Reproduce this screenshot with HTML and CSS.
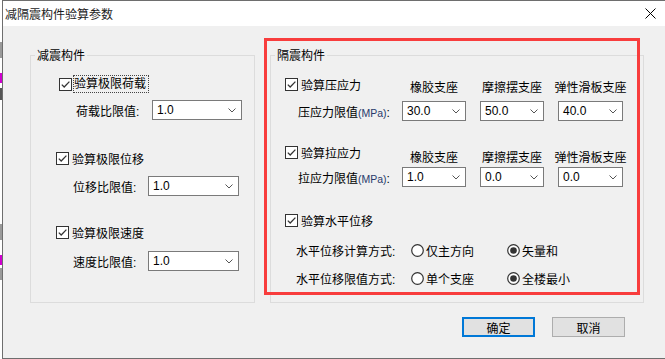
FILE: index.html
```html
<!DOCTYPE html>
<html lang="zh-CN">

<head>
    <meta charset="UTF-8">
    <meta name="viewport" content="width=device-width, initial-scale=1.0">
    <title>减隔震构件验算参数</title>
    <link rel="stylesheet" href="styles.css">
</head>

<body>
    <div class="screen">
        <div class="desk">
            <i class="mk-gray" style="margin-top:42px;height:16px"></i>
            <i class="mk-pink" style="margin-top:15px;height:10px"></i>
            <i class="mk-dark" style="margin-top:5px;height:12px"></i>
            <i class="mk-gray" style="margin-top:124px;height:16px"></i>
            <i class="mk-pink" style="margin-top:15px;height:10px"></i>
            <i class="mk-gray" style="margin-top:3px;height:12px"></i>
        </div>

        <div class="window">
            <div class="titlebar">
                <span class="title">减隔震构件验算参数</span>
                <svg class="close" width="11" height="11" viewBox="0 0 11 11">
                    <path d="M0.5 0.5 L10.5 10.5 M10.5 0.5 L0.5 10.5" stroke="#000" stroke-width="1" fill="none" />
                </svg>
            </div>

            <div class="body">
                <div class="groups">
                    <!-- 减震构件 -->
                    <section class="group group-left">
                        <span class="legend">减震构件</span>

                        <div class="check check-a">
                            <span class="box"><svg width="11" height="11" viewBox="0 0 11 11"><path d="M1.8 5.6 L4.2 8 L9.4 2.6" fill="none" stroke="#333" stroke-width="1.3" /></svg></span>
                            <span class="focus">验算极限荷载</span>
                        </div>
                        <div class="field field-a">
                            <span class="flabel">荷载比限值:</span>
                            <div class="select"><span>1.0</span><svg width="8" height="5" viewBox="0 0 8 5"><path d="M0.5 0.5 L4 4 L7.5 0.5" fill="none" stroke="#555" /></svg></div>
                        </div>

                        <div class="check check-b">
                            <span class="box"><svg width="11" height="11" viewBox="0 0 11 11"><path d="M1.8 5.6 L4.2 8 L9.4 2.6" fill="none" stroke="#333" stroke-width="1.3" /></svg></span>
                            <span>验算极限位移</span>
                        </div>
                        <div class="field field-b">
                            <span class="flabel">位移比限值:</span>
                            <div class="select"><span>1.0</span><svg width="8" height="5" viewBox="0 0 8 5"><path d="M0.5 0.5 L4 4 L7.5 0.5" fill="none" stroke="#555" /></svg></div>
                        </div>

                        <div class="check check-c">
                            <span class="box"><svg width="11" height="11" viewBox="0 0 11 11"><path d="M1.8 5.6 L4.2 8 L9.4 2.6" fill="none" stroke="#333" stroke-width="1.3" /></svg></span>
                            <span>验算极限速度</span>
                        </div>
                        <div class="field field-c">
                            <span class="flabel">速度比限值:</span>
                            <div class="select"><span>1.0</span><svg width="8" height="5" viewBox="0 0 8 5"><path d="M0.5 0.5 L4 4 L7.5 0.5" fill="none" stroke="#555" /></svg></div>
                        </div>
                    </section>

                    <!-- 隔震构件 -->
                    <section class="group group-right">
                        <span class="legend">隔震构件</span>

                        <div class="blk blk-1">
                            <div class="check rcheck">
                                <span class="box"><svg width="11" height="11" viewBox="0 0 11 11"><path d="M1.8 5.6 L4.2 8 L9.4 2.6" fill="none" stroke="#333" stroke-width="1.3" /></svg></span>
                                <span>验算压应力</span>
                            </div>
                            <span class="hd">橡胶支座</span>
                            <span class="hd">摩擦摆支座</span>
                            <span class="hd">弹性滑板支座</span>
                            <span class="rlabel">压应力限值<small>(MPa)</small>:</span>
                            <div class="select"><span>30.0</span><svg width="8" height="5" viewBox="0 0 8 5"><path d="M0.5 0.5 L4 4 L7.5 0.5" fill="none" stroke="#555" /></svg></div>
                            <div class="select"><span>50.0</span><svg width="8" height="5" viewBox="0 0 8 5"><path d="M0.5 0.5 L4 4 L7.5 0.5" fill="none" stroke="#555" /></svg></div>
                            <div class="select"><span>40.0</span><svg width="8" height="5" viewBox="0 0 8 5"><path d="M0.5 0.5 L4 4 L7.5 0.5" fill="none" stroke="#555" /></svg></div>
                        </div>

                        <div class="blk blk-2">
                            <div class="check rcheck">
                                <span class="box"><svg width="11" height="11" viewBox="0 0 11 11"><path d="M1.8 5.6 L4.2 8 L9.4 2.6" fill="none" stroke="#333" stroke-width="1.3" /></svg></span>
                                <span>验算拉应力</span>
                            </div>
                            <span class="hd">橡胶支座</span>
                            <span class="hd">摩擦摆支座</span>
                            <span class="hd">弹性滑板支座</span>
                            <span class="rlabel">拉应力限值<small>(MPa)</small>:</span>
                            <div class="select"><span>1.0</span><svg width="8" height="5" viewBox="0 0 8 5"><path d="M0.5 0.5 L4 4 L7.5 0.5" fill="none" stroke="#555" /></svg></div>
                            <div class="select"><span>0.0</span><svg width="8" height="5" viewBox="0 0 8 5"><path d="M0.5 0.5 L4 4 L7.5 0.5" fill="none" stroke="#555" /></svg></div>
                            <div class="select"><span>0.0</span><svg width="8" height="5" viewBox="0 0 8 5"><path d="M0.5 0.5 L4 4 L7.5 0.5" fill="none" stroke="#555" /></svg></div>
                        </div>

                        <div class="check rcheck check-h">
                            <span class="box"><svg width="11" height="11" viewBox="0 0 11 11"><path d="M1.8 5.6 L4.2 8 L9.4 2.6" fill="none" stroke="#333" stroke-width="1.3" /></svg></span>
                            <span>验算水平位移</span>
                        </div>

                        <div class="rrow rrow-1">
                            <span>水平位移计算方式:</span>
                            <label class="opt"><svg class="radio" width="13" height="13" viewBox="0 0 13 13"><circle cx="6.5" cy="6.5" r="5.8" fill="#fff" stroke="#333" stroke-width="1.2" /></svg>仅主方向</label>
                            <label class="opt"><svg class="radio" width="13" height="13" viewBox="0 0 13 13"><circle cx="6.5" cy="6.5" r="5.8" fill="#fff" stroke="#333" stroke-width="1.2" /><circle cx="6.5" cy="6.5" r="3.3" fill="#333" /></svg>矢量和</label>
                        </div>
                        <div class="rrow rrow-2">
                            <span>水平位移限值方式:</span>
                            <label class="opt"><svg class="radio" width="13" height="13" viewBox="0 0 13 13"><circle cx="6.5" cy="6.5" r="5.8" fill="#fff" stroke="#333" stroke-width="1.2" /></svg>单个支座</label>
                            <label class="opt"><svg class="radio" width="13" height="13" viewBox="0 0 13 13"><circle cx="6.5" cy="6.5" r="5.8" fill="#fff" stroke="#333" stroke-width="1.2" /><circle cx="6.5" cy="6.5" r="3.3" fill="#333" /></svg>全楼最小</label>
                        </div>
                    </section>
                </div>

                <div class="buttons">
                    <button class="btn btn-default">确定</button>
                    <button class="btn">取消</button>
                </div>
            </div>

            <!-- 红色标注框 -->
            <div class="mark"></div>
        </div>
    </div>
</body>

</html>
```

FILE: styles.css
```css
* {
    box-sizing: border-box;
}

body {
    margin: 0;
    font-family: "Liberation Sans", "Noto Sans CJK SC", sans-serif;
    font-size: 12px;
    color: #000;
    background: #fff;
}

.screen {
    display: flex;
    width: 665px;
    height: 359px;
    overflow: hidden;
}

.desk {
    width: 2px;
    display: flex;
    flex-direction: column;
    background: #fff;
}

.desk i {
    display: block;
    flex: none;
}

.mk-gray {
    background: #9a9a9a;
}

.mk-dark {
    background: #555;
}

.mk-pink {
    background: #d000d0;
}

.window {
    position: relative;
    flex: 1;
    display: flex;
    flex-direction: column;
    border: 1px solid #6e6e6e;
    border-right: none;
    background: #f0f0f0;
}

.titlebar {
    height: 25px;
    flex: none;
    display: flex;
    align-items: center;
    justify-content: space-between;
    padding: 0 9px 0 2px;
    background: #fff;
}

.title {
    color: #1b1b1b;
}

.body {
    flex: 1;
}

.groups {
    display: flex;
    gap: 15px;
    margin: 29px 0 0 27px;
}

.group {
    height: 248px;
    border: 1px solid #dcdcdc;
}

.group-left {
    width: 225px;
}

.group-right {
    width: 374px;
}

.legend {
    display: block;
    width: max-content;
    margin: -8px 0 0 4px;
    padding: 0 2px;
    line-height: 16px;
    background: #f0f0f0;
}

/* checkbox rows */
.check {
    display: flex;
    align-items: center;
    height: 18px;
    white-space: nowrap;
}

.box {
    display: flex;
    flex: none;
    width: 13px;
    height: 13px;
    margin-right: 3px;
    border: 1px solid #333;
    background: #fff;
}

.focus {
    line-height: 16px;
    padding: 0 2px 0 0;
    border: 1px dotted #444;
}

.check-a {
    margin: 11px 0 0 28px;
}

.check-a .box {
    margin-right: 1px;
}

.check-b {
    margin: 29px 0 0 25px;
}

.check-c {
    margin: 27px 0 0 25px;
}

.field {
    display: flex;
    align-items: center;
}

.flabel {
    flex: none;
    width: 75px;
}

.field-a {
    margin: 7px 0 0 45px;
}

.field-a .flabel {
    width: 76px;
}

.field-a .select {
    width: 90px;
}

.field-b {
    margin: 9px 0 0 42px;
}

.field-c {
    margin: 10px 0 0 42px;
}

.field-b .select,
.field-c .select {
    width: 91px;
}

.select {
    display: flex;
    align-items: center;
    justify-content: space-between;
    height: 20px;
    padding: 0 5px 0 4px;
    border: 1px solid #7a7a7a;
    background: #fff;
}

.select svg {
    display: block;
}

/* 隔震构件 */
.blk {
    display: grid;
    grid-template-columns: 117px 64px 64px 65px;
    column-gap: 14px;
}

.blk-1 {
    margin-top: 11px;
    row-gap: 5px;
}

.blk-2 {
    margin-top: 22px;
    row-gap: 1px;
}

.rcheck {
    margin-left: 14px;
    align-self: start;
}

.hd {
    margin: 5px -10px 0;
    line-height: 16px;
    text-align: center;
    white-space: nowrap;
    align-self: start;
}

.blk-2 .hd {
    margin-top: 7px;
}

.rlabel {
    margin-left: 27px;
    align-self: center;
    white-space: nowrap;
}

.rlabel small {
    font-size: 10.5px;
    color: #27396b;
}

.check-h {
    margin-top: 24px;
}

.rrow {
    display: grid;
    grid-template-columns: 115px 96px auto;
    align-items: center;
    height: 18px;
    margin-left: 25px;
    white-space: nowrap;
}

.rrow-1 {
    margin-top: 12px;
}

.rrow-2 {
    margin-top: 10px;
}

.opt {
    display: flex;
    align-items: center;
}

.radio {
    display: block;
    margin-right: 2px;
}

.buttons {
    display: flex;
    justify-content: flex-end;
    gap: 17px;
    margin-top: 14px;
    padding-right: 40px;
}

.btn {
    width: 73px;
    height: 20px;
    padding: 0;
    font: inherit;
    color: #000;
    background: #e1e1e1;
    border: 1px solid #adadad;
}

.btn-default {
    border: 2px solid #0078d7;
}

.mark {
    position: absolute;
    left: 261px;
    top: 37px;
    width: 376px;
    height: 257px;
    border: 3px solid #f83d3d;
    pointer-events: none;
}
```
